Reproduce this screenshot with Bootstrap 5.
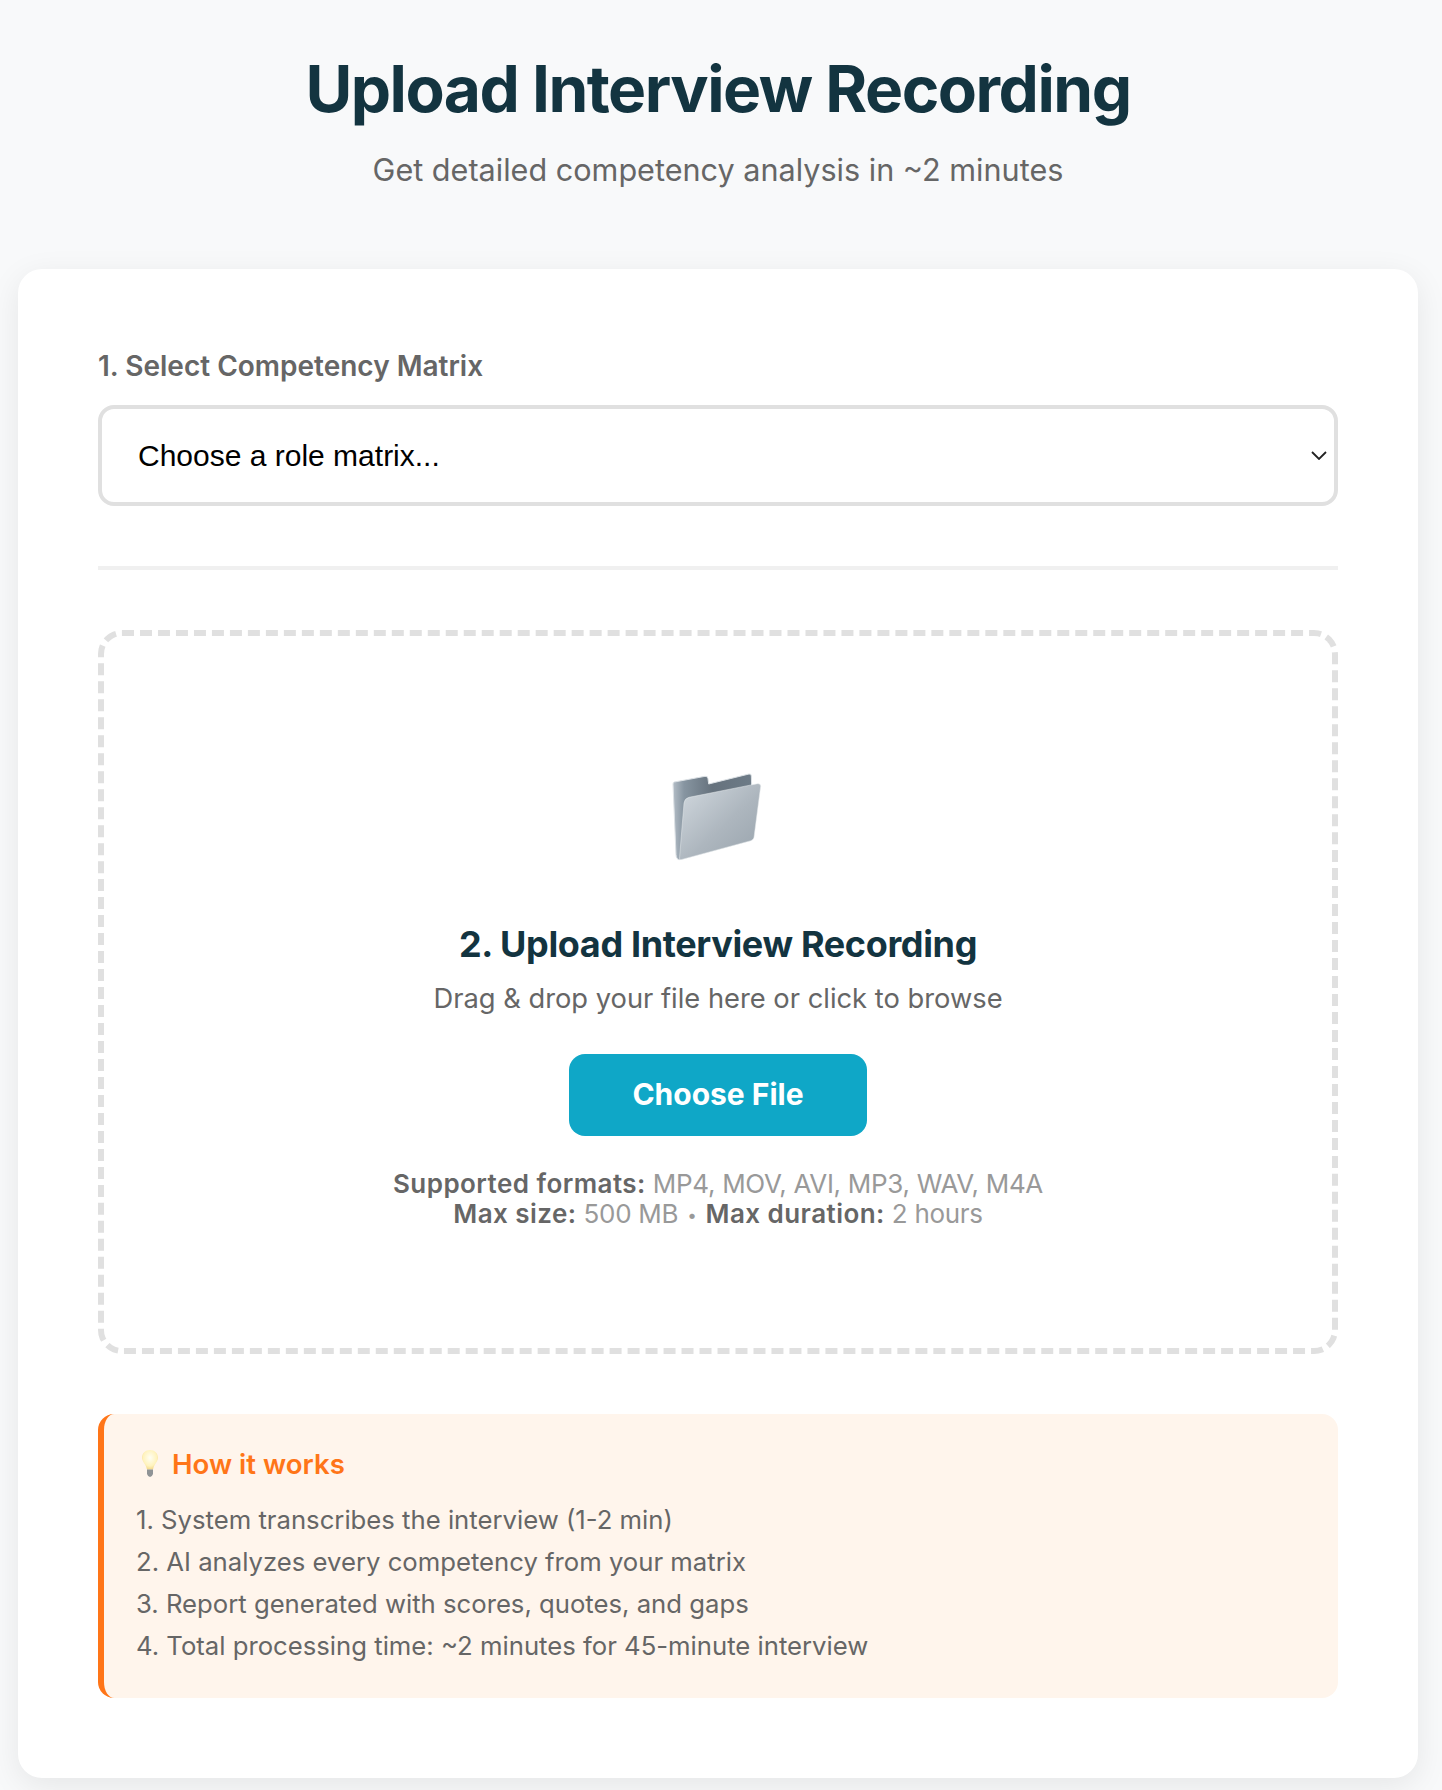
<!DOCTYPE html>
<html lang="en">
<head>
<meta charset="UTF-8">
<meta name="viewport" content="width=device-width, initial-scale=1.0">
<title>Upload Interview Recording</title>
<link href="https://cdn.jsdelivr.net/npm/bootstrap@5.3.0/dist/css/bootstrap.min.css" rel="stylesheet">
<script src="https://cdn.jsdelivr.net/npm/bootstrap@5.3.0/dist/js/bootstrap.bundle.min.js"></script>
<style>
    body {
        font-family: Inter, sans-serif;
        background: #f8f9fa;
        color: #666;
        padding: 0 24px 12px 18px;
    }
    .page-head {
        padding: 51px 0 80px;
    }
    .page-title {
        font-size: 64px;
        font-weight: 700;
        letter-spacing: -1.5px;
        line-height: 1.2;
        color: #133440;
        margin-bottom: 23px;
    }
    .page-sub {
        font-size: 30.6px;
        line-height: 38px;
    }
    .main-panel {
        background: #fff;
        border-radius: 24px;
        padding: 80px;
        box-shadow: 0 8px 32px rgba(0, 0, 0, .08);
    }
    .step-label {
        display: block;
        font-size: 28px;
        font-weight: 600;
        line-height: 34px;
        margin-bottom: 22px;
    }
    .matrix-select {
        height: 101px;
        border: 4px solid #e0e0e0;
        border-radius: 16px;
        padding: 0 36px;
        font-family: "Liberation Sans", Arial, sans-serif;
        font-size: 30px;
        color: #000;
        background-image: url("data:image/svg+xml,%3csvg xmlns='http://www.w3.org/2000/svg' viewBox='0 0 16 9'%3e%3cpath fill='none' stroke='%23222' stroke-width='1.8' d='M1 1l7 7 7-7'/%3e%3c/svg%3e");
        background-position: right 7px center;
        background-size: 16px 9px;
    }
    .section-rule {
        height: 4px;
        margin: 60px 0;
        background: #f0f0f0;
    }
    .drop-zone {
        height: 724px;
        padding-top: 137px;
        border: 6px dashed #e0e0e0;
        border-radius: 24px;
    }
    .folder-icon {
        width: 92px;
        height: 88px;
        margin-bottom: 61px;
    }
    .drop-title {
        font-size: 36px;
        font-weight: 700;
        letter-spacing: -.35px;
        line-height: 44px;
        color: #133440;
        margin-bottom: 13px;
    }
    .drop-hint {
        font-size: 27.3px;
        line-height: 40px;
        margin-bottom: 35px;
    }
    .choose-btn {
        width: 298px;
        height: 82px;
        border: 0;
        border-radius: 16px;
        background: #0fa7c7;
        color: #fff;
        font-size: 30px;
        font-weight: 700;
        margin-bottom: 33px;
    }
    .format-note {
        font-size: 26px;
        letter-spacing: -.3px;
        line-height: 30px;
        color: #999;
    }
    .format-note strong {
        font-weight: 600;
        letter-spacing: .45px;
        color: #666;
    }
    .dot-sep {
        font-size: 17px;
        margin: 0 2px;
        vertical-align: 2px;
    }
    .how-box {
        margin-top: 60px;
        height: 284px;
        padding: 32px;
        background: #fff5ec;
        border-left: 6px solid #ff7518;
        border-radius: 16px;
    }
    .how-title {
        font-size: 27.6px;
        font-weight: 600;
        line-height: 36px;
        color: #ff7518;
        margin-bottom: 17px;
    }
    .bulb-icon {
        width: 16px;
        height: 27px;
        margin: 0 14px 0 6px;
    }
    .how-line {
        font-size: 25.7px;
        line-height: 42px;
    }
</style>
</head>
<body>
    <header class="page-head text-center">
        <h1 class="page-title">Upload Interview Recording</h1>
        <p class="page-sub mb-0">Get detailed competency analysis in ~2 minutes</p>
    </header>

    <main class="main-panel">
        <label class="step-label" for="matrix">1. Select Competency Matrix</label>
        <select class="form-select matrix-select" id="matrix">
            <option>Choose a role matrix...</option>
        </select>

        <div class="section-rule"></div>

        <section class="drop-zone d-flex flex-column align-items-center text-center">
            <svg class="folder-icon" viewBox="97 95 276 264" aria-hidden="true">
                <defs>
                    <linearGradient id="folderBack" x1="0" y1="0" x2="1" y2="0">
                        <stop offset="0" stop-color="#b3bdc6"/>
                        <stop offset=".14" stop-color="#8795a1"/>
                        <stop offset=".5" stop-color="#66727d"/>
                        <stop offset="1" stop-color="#6d7b87"/>
                    </linearGradient>
                    <linearGradient id="folderFront" x1="0" y1="0" x2="1" y2="1">
                        <stop offset="0" stop-color="#d3dae0"/>
                        <stop offset=".55" stop-color="#adb6be"/>
                        <stop offset="1" stop-color="#98a3ac"/>
                    </linearGradient>
                </defs>
                <path d="M104 122 196 105Q204 104 205 112L207 128 328 98Q335 97 335 104L336 135 120 355Q110 355 109 340L100 128Q100 123 104 122Z" fill="url(#folderBack)" stroke="#dde2e6" stroke-width="3"/>
                <path d="M148 168 354 127Q363 126 363 135L343 288Q342 296 334 298L124 355Q118 356 120 345L133 185Q135 171 148 168Z" fill="url(#folderFront)" stroke="#e6eaed" stroke-width="1.500"/>
            </svg>
            <h2 class="drop-title">2. Upload Interview Recording</h2>
            <p class="drop-hint">Drag &amp; drop your file here or click to browse</p>
            <button class="btn choose-btn" type="button">Choose File</button>
            <div class="format-note">
                <strong>Supported formats:</strong> MP4, MOV, AVI, MP3, WAV, M4A<br>
                <strong>Max size:</strong> 500 MB <span class="dot-sep">•</span> <strong>Max duration:</strong> 2 hours
            </div>
        </section>

        <section class="how-box">
            <div class="how-title d-flex align-items-center">
                <svg class="bulb-icon" viewBox="0 0 16 27" aria-hidden="true">
                    <defs>
                        <radialGradient id="bulbGlow" cx=".5" cy=".4" r=".6">
                            <stop offset="0" stop-color="#fffef4"/>
                            <stop offset=".7" stop-color="#fff3bd"/>
                            <stop offset="1" stop-color="#f3d98a"/>
                        </radialGradient>
                    </defs>
                    <path d="M8 0C3.500 0 0 3.300 0 7.800 0 11.500 3.800 14 5 19.500H11C12.200 14 16 11.500 16 7.800 16 3.300 12.500 0 8 0Z" fill="url(#bulbGlow)"/>
                    <path d="M5 19.500H11V24Q10 27 8 27T5 24Z" fill="#8f9396"/>
                </svg>
                <span>How it works</span>
            </div>
            <div class="how-line">1. System transcribes the interview (1-2 min)</div>
            <div class="how-line">2. AI analyzes every competency from your matrix</div>
            <div class="how-line">3. Report generated with scores, quotes, and gaps</div>
            <div class="how-line">4. Total processing time: ~2 minutes for 45-minute interview</div>
        </section>
    </main>
</body>
</html>
